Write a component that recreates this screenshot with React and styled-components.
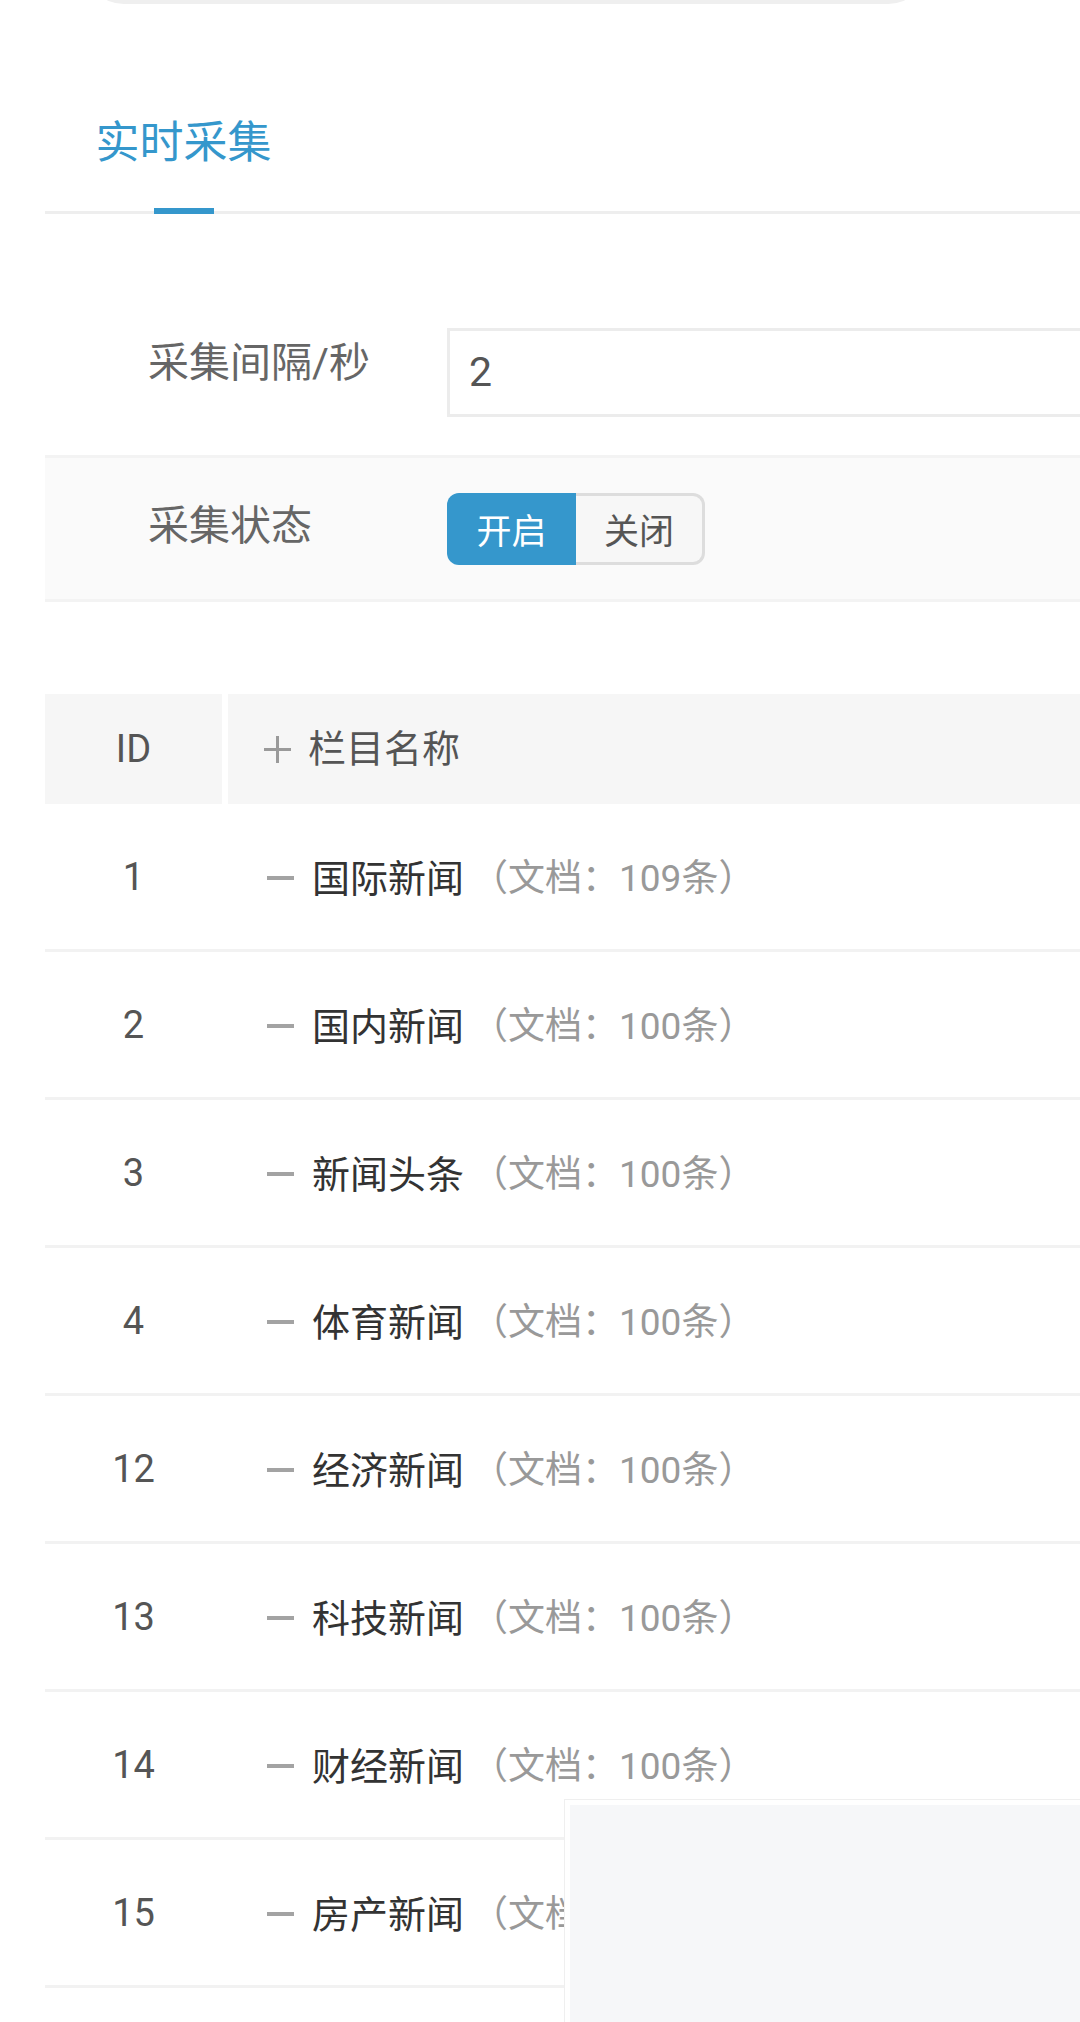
import React from 'react'
import styled, { createGlobalStyle } from 'styled-components'

const GlobalStyle = createGlobalStyle`
  html, body {
    margin: 0;
    padding: 0;
    background: #ffffff;
    overflow: hidden;
  }
  body {
    font-family: Roboto, "Noto Sans CJK SC", "Noto Sans", sans-serif;
    color: #333;
  }
  * {
    box-sizing: border-box;
  }
`

const Page = styled.div`
  width: 1500px;
  height: 2022px;
  overflow: hidden;
`

const SearchEdge = styled.div`
  margin-left: 84px;
  width: 844px;
  height: 40px;
  margin-top: -36px;
  background: #efefef;
  border-radius: 0 0 40px 40px;
`

const Content = styled.div`
  padding-left: 45px;
`

const TabTitle = styled.ul`
  display: flex;
  margin: 89px 0 0;
  padding: 0;
  list-style: none;
  height: 121px;
  border-bottom: 3px solid #eeeeee;
`

const TabItem = styled.li`
  position: relative;
  width: 277px;
  height: 118px;
  line-height: 100px;
  text-align: center;
  font-size: 44px;
  color: ${({ active }) => (active ? '#3597cc' : '#666')};
`

const TabIndicator = styled.span`
  position: absolute;
  left: 50%;
  bottom: -3px;
  width: 60px;
  height: 6px;
  margin-left: -30px;
  background: #3597cc;
`

const Form = styled.div`
  padding-top: 114px;
`

const FormRow = styled.div`
  display: flex;
  align-items: center;
  height: ${({ h }) => h}px;
  background: ${({ shaded }) => (shaded ? '#fafafa' : 'transparent')};
  border-top: ${({ shaded }) => (shaded ? '3px solid #f3f3f3' : 'none')};
  border-bottom: ${({ shaded }) => (shaded ? '3px solid #f3f3f3' : 'none')};
`

const Label = styled.label`
  width: 402px;
  padding-left: 103px;
  font-size: 41px;
  line-height: 60px;
  color: #666;
  margin-top: ${({ raise }) => -raise}px;
`

const Input = styled.div`
  width: 1000px;
  height: 89px;
  border: 3px solid #ececec;
  background: #fff;
  padding-left: 19px;
  font-size: 41px;
  line-height: 83px;
  color: #555;
`

const Spacer = styled.div`
  height: ${({ h }) => h}px;
`

const Switch = styled.div`
  display: flex;
  height: 72px;
`

const SwitchBtn = styled.div`
  width: 129px;
  height: 72px;
  display: flex;
  align-items: center;
  justify-content: center;
  font-size: 35px;
  color: ${({ on }) => (on ? '#fff' : '#555')};
  background: ${({ on }) => (on ? '#3597cc' : '#f7f7f7')};
  border: ${({ on }) => (on ? 'none' : '3px solid #dddddd')};
  border-left: none;
  border-radius: ${({ on }) => (on ? '12px 0 0 12px' : '0 12px 12px 0')};
`

const Table = styled.div`
  margin-top: 92px;
`

const HeadRow = styled.div`
  display: flex;
  height: 110px;
  gap: 6px;
`

const HeadCell = styled.div`
  display: flex;
  align-items: center;
  justify-content: ${({ center }) => (center ? 'center' : 'flex-start')};
  width: ${({ w }) => (w ? `${w}px` : 'auto')};
  flex: ${({ w }) => (w ? 'none' : '1')};
  padding-left: ${({ center }) => (center ? 0 : 35)}px;
  padding-bottom: ${({ center }) => (center ? 0 : 8)}px;
  background: #f6f6f6;
  font-size: 38px;
  color: #555;
`

const BodyRow = styled.div`
  display: flex;
  align-items: center;
  height: 148px;
  border-bottom: 3px solid #f2f2f2;
`

const IdCell = styled.div`
  width: 177px;
  text-align: center;
  font-size: 38px;
  color: #555;
`

const NameCell = styled.div`
  display: flex;
  align-items: center;
  padding-left: 45px;
  padding-bottom: 3px;
  font-size: 38px;
  white-space: nowrap;
`

const Dash = styled.span`
  width: 27px;
  height: 4px;
  margin-top: 6px;
  margin-right: 18px;
  background: #a3a3a3;
`

const Name = styled.span`
  color: #333;
`

const Count = styled.span`
  margin-left: 7px;
  font-size: 37px;
  color: #999;
`

const Overlay = styled.div`
  position: fixed;
  left: 564px;
  top: 1799px;
  right: 0;
  bottom: 0;
  padding: 5px 0 0 5px;
  background: #fff;
  border-left: 1px solid #efefef;
  border-top: 1px solid #efefef;
`

const OverlayInner = styled.div`
  width: 100%;
  height: 100%;
  background: #f6f7f9;
`

const PlusIcon = () => (
  <svg width="29" height="29" viewBox="0 0 29 29" style={{ marginRight: 16, marginTop: 8 }}>
    <path d="M14.5 1v27M1 14.5h27" stroke="#9a9a9a" strokeWidth="3" fill="none" />
  </svg>
)

const columns = [
  { id: 1, name: '国际新闻', count: 109 },
  { id: 2, name: '国内新闻', count: 100 },
  { id: 3, name: '新闻头条', count: 100 },
  { id: 4, name: '体育新闻', count: 100 },
  { id: 12, name: '经济新闻', count: 100 },
  { id: 13, name: '科技新闻', count: 100 },
  { id: 14, name: '财经新闻', count: 100 },
  { id: 15, name: '房产新闻', count: 100 },
]

export default function App() {
  return (
    <>
      <GlobalStyle />
      <Page>
        <SearchEdge />
        <Content>
          <TabTitle>
            <TabItem active>
              实时采集
              <TabIndicator />
            </TabItem>
          </TabTitle>

          <Form>
            <FormRow h={89}>
              <Label raise={20}>采集间隔/秒</Label>
              <Input>2</Input>
            </FormRow>
            <Spacer h={38} />
            <FormRow h={147} shaded>
              <Label raise={6}>采集状态</Label>
              <Switch>
                <SwitchBtn on>开启</SwitchBtn>
                <SwitchBtn>关闭</SwitchBtn>
              </Switch>
            </FormRow>
          </Form>

          <Table>
            <HeadRow>
              <HeadCell w={177} center>ID</HeadCell>
              <HeadCell>
                <PlusIcon />
                栏目名称
              </HeadCell>
            </HeadRow>
            {columns.map((c) => (
              <BodyRow key={c.id}>
                <IdCell>{c.id}</IdCell>
                <NameCell>
                  <Dash />
                  <Name>{c.name}</Name>
                  <Count>（文档：{c.count}条）</Count>
                </NameCell>
              </BodyRow>
            ))}
          </Table>
        </Content>
      </Page>
      <Overlay>
        <OverlayInner />
      </Overlay>
    </>
  )
}
